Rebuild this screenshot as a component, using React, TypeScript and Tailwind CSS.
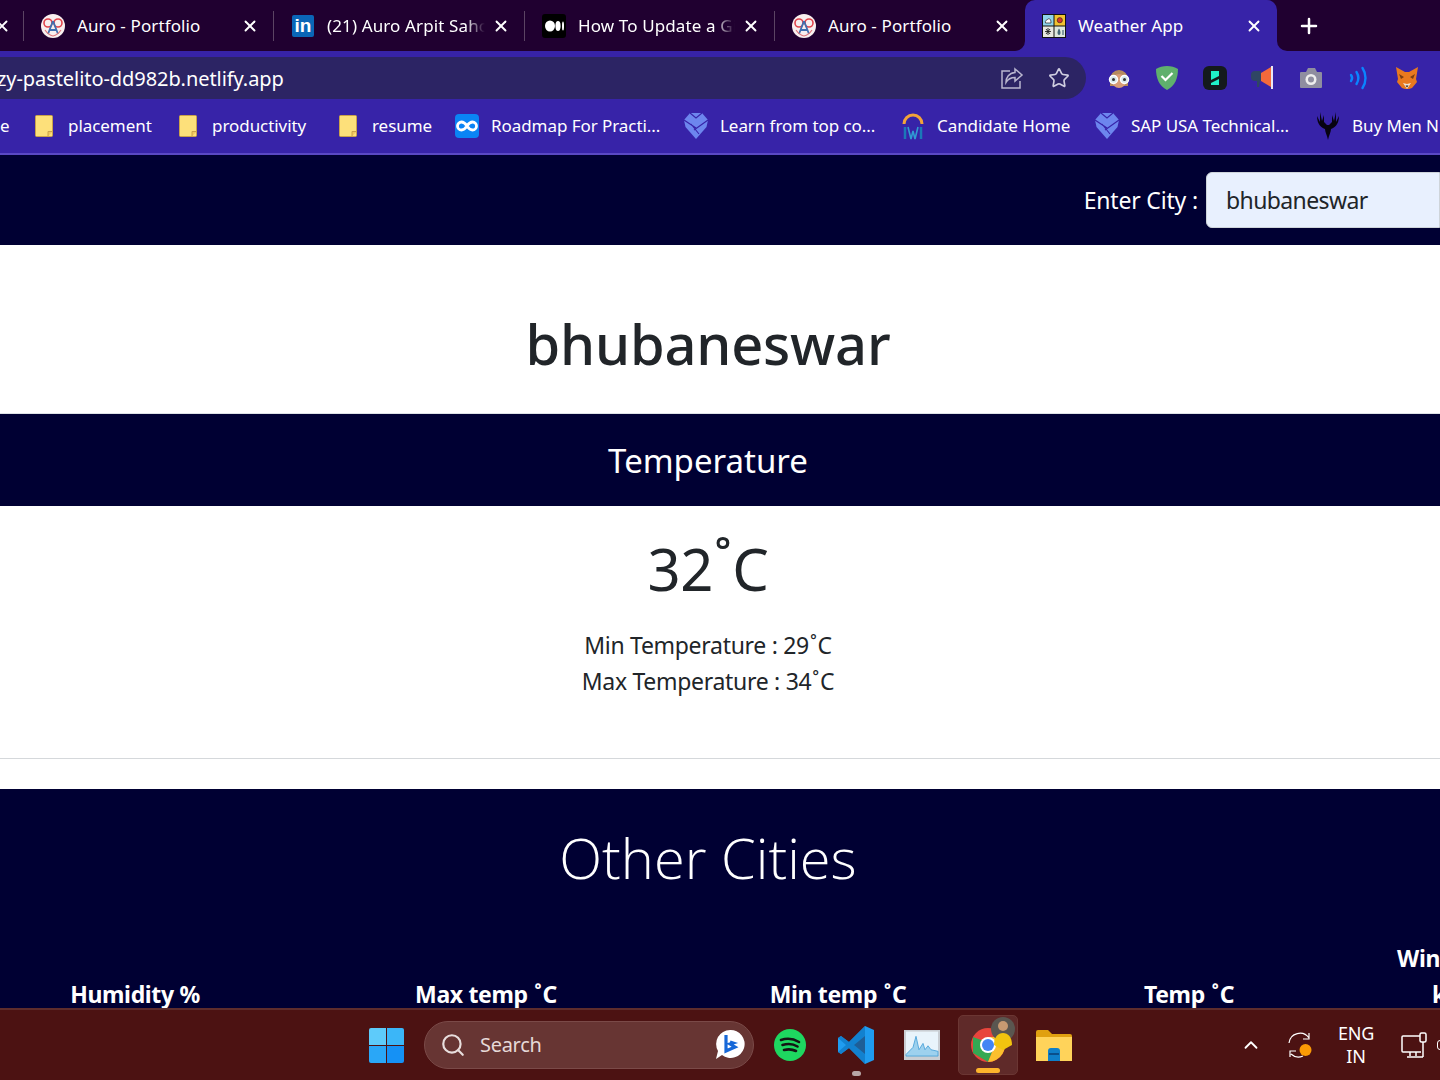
import { ChevronUp, Plus, Search, Star, X } from "lucide-react";
import type { ReactNode } from "react";

const uiFont = "[font-family:'Noto_Sans','Open_Sans',sans-serif]";

function AuroIcon() {
  return (
    <svg viewBox="0 0 24 24" className="size-6">
      <circle cx="12" cy="12" r="12" fill="#f8efef" />
      <circle cx="7" cy="9" r="4" fill="none" stroke="#e0444c" strokeWidth="1.6" />
      <circle cx="17" cy="9" r="4" fill="none" stroke="#e0444c" strokeWidth="1.6" />
      <path d="M12 7 7 20M12 7l5 13M9 16h6" fill="none" stroke="#3f6fb0" strokeWidth="1.8" />
      <path d="M4 16c2 3 4 5 8 6 4-1 6-3 8-6" fill="none" stroke="#e0777c" strokeWidth="1.2" />
    </svg>
  );
}

function LinkedinIcon() {
  return (
    <div className="flex size-[22px] items-center justify-center rounded-[2px] bg-[#0a66b7] text-[19px] leading-none font-bold text-white [font-family:'Liberation_Sans',sans-serif]">
      in
    </div>
  );
}

function MediumIcon() {
  return (
    <svg viewBox="0 0 24 24" className="size-6">
      <rect width="24" height="24" rx="3" fill="#000" />
      <ellipse cx="8" cy="12" rx="5" ry="5.5" fill="#fff" />
      <ellipse cx="16" cy="12" rx="2.6" ry="5" fill="#fff" />
      <ellipse cx="21" cy="12" rx="1" ry="4.5" fill="#fff" />
    </svg>
  );
}

function WeatherIcon() {
  return (
    <svg viewBox="0 0 24 24" className="size-6">
      <rect width="24" height="24" fill="#111" />
      <rect x="1" y="1" width="10.5" height="10.5" fill="#8fd3ea" />
      <rect x="12.5" y="1" width="10.5" height="10.5" fill="#f2c230" />
      <rect x="1" y="12.5" width="10.5" height="10.5" fill="#e8e8e0" />
      <rect x="12.5" y="12.5" width="10.5" height="10.5" fill="#dfe8dc" />
      <path d="M3.5 9c-1-3 2-3 2.5-4 2-1 3 1 3 4z" fill="#fff" stroke="#222" strokeWidth=".7" />
      <circle cx="17.8" cy="6.2" r="2.6" fill="#d8352a" stroke="#222" strokeWidth=".6" />
      <path d="M6 14v7M3 17.500h6M4 15l4 5M8 15l-4 5" stroke="#222" strokeWidth=".9" />
      <path d="M17 14.500c-2 3-2 6 0 6.500 2-.5 2-3.500 0-6.500z" fill="#467" />
      <path d="M21 16v5" stroke="#467" strokeWidth="1.200" />
    </svg>
  );
}

function FolderMark() {
  return (
    <svg viewBox="0 0 18 22" className="h-[22px] w-[18px]">
      <rect x="0.500" y="0.500" width="17" height="21" rx="1" fill="#fde07a" stroke="#caa24a" />
      <path d="M13 21.500v-5h4.500" fill="#f1c95f" stroke="#caa24a" />
    </svg>
  );
}

function RoadmapIcon() {
  return (
    <div className="flex size-6 items-center justify-center rounded-[4px] bg-[#0a84f5]">
      <svg viewBox="0 0 24 24" className="size-6" fill="none" stroke="#fff" strokeWidth="2.800">
        <path d="M12 12c-2-3-3.500-4-5.500-4a4 4 0 0 0 0 8c2 0 3.500-1 5.500-4s3.500-4 5.500-4a4 4 0 0 1 0 8c-2 0-3.500-1-5.500-4z" />
      </svg>
    </div>
  );
}

function GemIcon() {
  return (
    <svg viewBox="0 0 24 28" className="h-[28px] w-6">
      <path d="M6 1h12l6 7-1.500 7L12 27 1.500 15 0 8z" fill="#6d86ee" />
      <path d="M6 1l6 5 6-5M0 8l12 8M24 8 10 18M7 12l8 10" fill="none" stroke="#3723a8" strokeWidth="1.100" />
    </svg>
  );
}

function CandidateIcon() {
  return (
    <svg viewBox="0 0 24 28" className="h-[28px] w-6">
      <path d="M3 12a9 9 0 0 1 18 0" fill="none" stroke="#f2a33a" strokeWidth="3" />
      <path d="M4 27V15M20 27V15" stroke="#1b78b8" strokeWidth="2.500" />
      <path d="M7 15l3 12 2-8 2 8 3-12" fill="none" stroke="#2f9bd3" strokeWidth="1.600" />
    </svg>
  );
}

function DeerIcon() {
  return (
    <svg viewBox="0 0 24 30" className="h-[30px] w-6">
      <path
        d="M12 29c-1-5-3-8-3-11-3-1-8-4-8-13l3 6V1l2 9 2-6v7l3 3h2l3-3V4l2 6 2-9v10l3-6c0 9-5 12-8 13 0 3-2 6-3 11z"
        fill="#070312"
      />
    </svg>
  );
}

function ShareBoxIcon() {
  return (
    <svg viewBox="0 0 24 24" className="mr-[24px] size-[24px]" fill="none" stroke="#b9b6cf" strokeWidth="1.500">
      <path d="M10 5H2v17h18v-7" />
      <path d="M15 3l7 6-7 6v-3.500c-4 0-7 1.500-9 5 0-5 3-9.500 9-10z" />
    </svg>
  );
}

function Tab({
  icon,
  title,
  fade,
  tabClass,
}: {
  icon: ReactNode;
  title: string;
  fade?: string;
  tabClass: string;
}) {
  return (
    <div className={`flex h-full shrink-0 items-center ${tabClass}`}>
      <div className="ml-[17px] flex w-6 shrink-0 justify-center">{icon}</div>
      <div
        className={`ml-3 flex-1 overflow-hidden text-[17px] tracking-[0.12px] whitespace-nowrap text-white ${fade ?? ""}`}
      >
        {title}
      </div>
      <X className="mr-[14px] ml-1 size-[18px] shrink-0 text-white" strokeWidth={2.5} />
    </div>
  );
}

function Bookmark({
  icon,
  label,
  itemClass,
}: {
  icon: ReactNode;
  label: string;
  itemClass: string;
}) {
  return (
    <div className={`flex shrink-0 items-center ${itemClass}`}>
      <div className="flex w-6 shrink-0 justify-center">{icon}</div>
      <span className="ml-3 text-[17px] tracking-[-0.06px] whitespace-nowrap text-white">{label}</span>
    </div>
  );
}

function ExtensionIcons() {
  return (
    <div className="ml-[21px] flex items-center gap-[24px]">
      <svg viewBox="0 0 24 24" className="size-6">
        <path d="M3 13a9 9 0 0 1 18 0v7H3z" fill="#b58a5e" />
        <circle cx="12" cy="15" r="7" fill="#d89c78" />
        <circle cx="6.500" cy="13.500" r="4" fill="#d6e6ea" stroke="#fff" strokeWidth="1.500" />
        <circle cx="17.500" cy="13.500" r="4" fill="#d6e6ea" stroke="#fff" strokeWidth="1.500" />
        <circle cx="6.500" cy="13.500" r="1.500" fill="#333" />
        <circle cx="17.500" cy="13.500" r="1.500" fill="#333" />
      </svg>
      <svg viewBox="0 0 24 24" className="size-6">
        <path d="M12 0c4 0 8 1 11 3 0 9-3 17-11 21C4 20 1 12 1 3c3-2 7-3 11-3z" fill="#5fb06d" />
        <path d="m6.500 10 4 4 7-7" fill="none" stroke="#fff" strokeWidth="2.200" />
      </svg>
      <svg viewBox="0 0 24 24" className="size-6">
        <rect width="24" height="24" rx="6" fill="#141a1c" />
        <path d="M8 5h8v5l-8 4zM8 17l8-4v6H8z" fill="#1ff0c8" />
      </svg>
      <svg viewBox="0 0 24 24" className="size-6">
        <path d="M0 9a4 4 0 0 1 4-4h6v10H4a4 4 0 0 1-4-4z" fill="#2f4664" />
        <path d="M6 15h3l-1 6H6z" fill="#2f4664" />
        <path d="M10 7 20 1v20L10 15z" fill="#f5693a" />
        <rect x="20" y="0" width="2" height="23" fill="#e8e6f5" />
      </svg>
      <svg viewBox="0 0 24 24" className="size-6">
        <path d="M2 6h5l2-4h7l2 4h4a1 1 0 0 1 1 1v14a1 1 0 0 1-1 1H2a1 1 0 0 1-1-1V7a1 1 0 0 1 1-1z" fill="#8f8ea0" />
        <circle cx="12" cy="13.500" r="5.500" fill="#eee" />
        <circle cx="12" cy="13.500" r="3" fill="#8f8ea0" />
      </svg>
      <svg viewBox="0 0 24 24" className="size-6" fill="none" stroke="#0a84ff" strokeWidth="2.400" strokeLinecap="round">
        <path d="M4 9c1.500 2 1.500 4 0 6M9.500 6c2.500 4 2.500 8 0 12M15.500 2c4 6 4 14 0 20" />
      </svg>
      <svg viewBox="0 0 24 24" className="size-6">
        <path d="M1 1l9 5h4l9-5-2 12 1 3-5 6-3 1h-4l-3-1-5-6 1-3z" fill="#e8791f" />
        <path d="M8 17l4 6 4-6-4 1z" fill="#f3e3cf" />
        <path d="M4 8l5 3-3 2zM20 8l-5 3 3 2z" fill="#7a3d12" />
        <path d="M10.500 19.500h3L12 21.500z" fill="#222" />
      </svg>
    </div>
  );
}

function BrowserChrome() {
  return (
    <div className={uiFont}>
      <div className="flex h-[51px] items-center overflow-hidden bg-[#200030]">
        <div className="flex h-full w-[24px] shrink-0 items-center justify-end">
          <X className="mr-[12px] size-[18px] shrink-0 text-white" strokeWidth={2.5} />
          <div className="h-[30px] w-px shrink-0 bg-[#5b4463]" />
        </div>
        <div className="flex h-full items-center">
          <Tab icon={<AuroIcon />} title="Auro - Portfolio" tabClass="w-[249px]" />
          <div className="h-[30px] w-px shrink-0 bg-[#5b4463]" />
          <Tab
            icon={<LinkedinIcon />}
            title="(21) Auro Arpit Sahoo"
            tabClass="w-[250px]"
            fade="[mask-image:linear-gradient(to_right,black_86%,transparent_98%)]"
          />
          <div className="h-[30px] w-px shrink-0 bg-[#5b4463]" />
          <Tab
            icon={<MediumIcon />}
            title="How To Update a GitHub"
            tabClass="w-[249px]"
            fade="[mask-image:linear-gradient(to_right,black_85%,transparent_98%)]"
          />
          <div className="h-[30px] w-px shrink-0 bg-[#5b4463]" />
          <Tab icon={<AuroIcon />} title="Auro - Portfolio" tabClass="w-[250px]" />
          <div className="relative h-full">
            <div className="absolute bottom-0 -left-[10px] size-[10px] bg-[#3723a8]">
              <div className="size-full rounded-br-[10px] bg-[#200030]" />
            </div>
            <Tab icon={<WeatherIcon />} title="Weather App" tabClass="w-[252px] rounded-t-[10px] bg-[#3723a8]" />
            <div className="absolute -right-[10px] bottom-0 size-[10px] bg-[#3723a8]">
              <div className="size-full rounded-bl-[10px] bg-[#200030]" />
            </div>
          </div>
        </div>
        <Plus className="ml-[20px] size-[24px] shrink-0 text-white" strokeWidth={2.5} />
      </div>

      <div className="flex h-[48px] items-end bg-[#3723a8]">
        <div className="flex h-[42px] w-[1086px] shrink-0 items-center overflow-hidden rounded-r-full bg-[#2c2464]">
          <span className="-ml-[3px] flex-1 pt-[2px] text-[20px] tracking-[-0.07px] whitespace-nowrap text-white">
            zy-pastelito-dd982b.netlify.app
          </span>
          <ShareBoxIcon />
          <Star className="mr-[16px] size-[22px] text-[#cfcde0]" strokeWidth={1.8} />
        </div>
        <div className="self-center pt-[6px]">
          <ExtensionIcons />
        </div>
      </div>

      <div className="flex h-[56px] items-center overflow-hidden border-b-2 border-b-[#5a48c4] bg-[#3723a8]">
        <span className="w-[32px] shrink-0 text-[17px] text-white">e</span>
        <Bookmark icon={<FolderMark />} label="placement" itemClass="w-[144px]" />
        <Bookmark icon={<FolderMark />} label="productivity" itemClass="w-[160px]" />
        <Bookmark icon={<FolderMark />} label="resume" itemClass="w-[119px]" />
        <Bookmark icon={<RoadmapIcon />} label="Roadmap For Practi..." itemClass="w-[229px]" />
        <Bookmark icon={<GemIcon />} label="Learn from top co..." itemClass="w-[217px]" />
        <Bookmark icon={<CandidateIcon />} label="Candidate Home" itemClass="w-[194px]" />
        <Bookmark icon={<GemIcon />} label="SAP USA Technical..." itemClass="w-[221px]" />
        <Bookmark icon={<DeerIcon />} label="Buy Men Nike" itemClass="w-[140px]" />
      </div>
    </div>
  );
}

function Degree() {
  return <span className="mx-[1px]">˚</span>;
}

function WeatherPage() {
  return (
    <div className="min-h-0 flex-1 overflow-hidden bg-white text-[#212529] [font-family:'Noto_Sans','Open_Sans',sans-serif]">
      <nav className="flex h-[90px] items-center justify-end bg-[#000033]">
        <label className="mt-[1px] mr-[8px] text-[23px] tracking-[-0.17px] text-white">Enter City :</label>
        <input
          readOnly
          value="bhubaneswar"
          className="h-[56px] w-[234px] rounded-l-[6px] border border-[#ced4da] bg-[#e8f0fe] px-[19px] text-[23px] tracking-[-0.6px] text-[#212529]"
        />
      </nav>

      <div className="w-[1416px]">
        <h1 className="flex h-[168px] items-center justify-center pt-[28px] text-[56px] leading-none font-medium tracking-[-0.2px]">
          bhubaneswar
        </h1>
      </div>

      <div className="flex h-[93px] w-full items-center border-t border-t-[#dee2e6] bg-[#000033]">
        <div className="w-[1416px] pt-[2px] text-center text-[33px] text-white">Temperature</div>
      </div>

      <div className="h-[253px] w-full border-b border-b-[#d5d8db]">
        <div className="w-[1416px] pt-[26px] text-center">
          <div className="text-[58px] leading-[74px] tracking-[-0.3px]">
            32
            <span className="relative -top-[6px] mx-[1px]">˚</span>C
          </div>
          <div className="mt-[21px] text-[23px] leading-[36px] tracking-[-0.3px]">
            <div>
              Min Temperature : 29
              <Degree />C
            </div>
            <div>
              Max Temperature : 34
              <Degree />C
            </div>
          </div>
        </div>
      </div>

      <div className="h-[30px]" />

      <section className="h-[219px] overflow-hidden bg-[#000033] text-white">
        <div className="w-[1416px] pt-[28px] text-center text-[56px] leading-[80px] font-light [font-family:'Open_Sans',sans-serif]">
          Other Cities
        </div>
        <div className="mt-[43px] flex items-end text-center text-[23px] leading-[36px] font-bold tracking-[-0.35px] whitespace-nowrap">
          <div className="w-[270px] shrink-0">Humidity %</div>
          <div className="w-[432px] shrink-0">
            Max temp <Degree />C
          </div>
          <div className="w-[272px] shrink-0">
            Min temp <Degree />C
          </div>
          <div className="w-[430px] shrink-0">
            Temp <Degree />C
          </div>
          <div className="w-[130px] shrink-0 -translate-x-[7px]">
            Wind Speed
            <br />
            km/h
          </div>
        </div>
      </section>
    </div>
  );
}

function Taskbar() {
  return (
    <div className="relative flex h-[72px] shrink-0 items-center border-t-2 border-t-[#5e2c2c] bg-[#4c1212] text-white [font-family:'Noto_Sans','Open_Sans',sans-serif]">
      <div className="ml-[369px] grid shrink-0 grid-cols-2 gap-[1px]">
        <div className="size-[17px] rounded-tl-[2px] bg-[#5ecbfa]" />
        <div className="size-[17px] rounded-tr-[2px] bg-[#3bb6f8]" />
        <div className="size-[17px] rounded-bl-[2px] bg-[#2aa7f7]" />
        <div className="size-[17px] rounded-br-[2px] bg-[#1591f5]" />
      </div>

      <div className="ml-[20px] flex h-[48px] w-[330px] shrink-0 items-center rounded-full border border-[#7a4a48] bg-[#673533]">
        <Search className="ml-[15px] size-[26px] text-[#e8dedd]" strokeWidth={2} />
        <span className="ml-[14px] flex-1 text-[20px] tracking-[-0.3px] text-[#e6d9d8]">Search</span>
        <svg viewBox="0 0 30 32" className="mr-[8px] h-[32px] w-[30px]">
          <path d="M15 1a14 14 0 1 1-8 25l-6 4 2-8A14 14 0 0 1 15 1z" fill="#fff" />
          <path d="M11 6v16l9-4-5-3 3-1-3-1" fill="none" stroke="#1668d8" strokeWidth="3.200" />
        </svg>
      </div>

      <svg viewBox="0 0 32 32" className="ml-[20px] size-[32px] shrink-0">
        <circle cx="16" cy="16" r="16" fill="#1ed760" />
        <path d="M7 11c6-2 13-1 18 2M8.500 16c5-1.500 11-1 15 1.500M10 21c4-1 9-.5 12 1" fill="none" stroke="#141414" strokeWidth="2.600" strokeLinecap="round" />
      </svg>

      <div className="relative ml-[32px] flex shrink-0 flex-col items-center">
        <svg viewBox="0 0 36 38" className="h-[38px] w-[36px]">
          <path d="M27 0 36 4v30l-9 4L11 22 3 28 0 26V12l3-2 8 6z" fill="#1f9cf0" />
          <path d="M27 10 16 19l11 9z" fill="#4c1212" />
          <path d="M27 0v38L11 22 3 28 0 26l8-7-8-7 3-2 8 6z" fill="#0f78c4" opacity=".75" />
        </svg>
        <div className="absolute -bottom-[12px] h-[5px] w-[9px] rounded-full bg-[#b8a5a5]" />
      </div>

      <svg viewBox="0 0 36 38" className="ml-[30px] h-[30px] w-[36px] shrink-0" preserveAspectRatio="none">
        <rect width="36" height="38" fill="#c9ced3" />
        <rect x="2" y="2" width="32" height="31" fill="#e9f4fb" />
        <path d="M2 31 9 22l3-14 3 17 4-8 2 8 3-5 3 5 7 2v6H2z" fill="#9dd1ee" stroke="#4ca3d9" />
      </svg>

      <div className="relative ml-[18px] flex h-[60px] w-[60px] shrink-0 items-center justify-center rounded-[5px] border border-[#6b3633] bg-[#5f2a29]">
        <svg viewBox="0 0 36 36" className="size-[36px]">
          <circle cx="18" cy="18" r="17" fill="#e8453c" />
          <path d="M3 10v16l15 9 7-17z" fill="#34a853" />
          <path d="M18 10h15a17 17 0 0 1-15 25l7-17z" fill="#fbc02d" />
          <circle cx="18" cy="18" r="8" fill="#fff" />
          <circle cx="18" cy="18" r="6" fill="#4285f4" />
        </svg>
        <svg viewBox="0 0 24 34" className="absolute top-[1px] right-[2px] h-[34px] w-[24px]">
          <circle cx="12" cy="12" r="12" fill="#5a5650" />
          <circle cx="12" cy="9" r="5" fill="#c79a72" />
          <path d="M3 28c0-8 4-12 9-12s9 4 9 12l-9 5z" fill="#f2c40f" />
        </svg>
        <div className="absolute bottom-[1px] h-[5px] w-[24px] rounded-full bg-[#fdb42c]" />
      </div>

      <svg viewBox="0 0 36 32" className="ml-[18px] h-[32px] w-[36px] shrink-0">
        <path d="M0 3a2 2 0 0 1 2-2h10l4 4h18a2 2 0 0 1 2 2v23H0z" fill="#e0a010" />
        <path d="M0 8h36v24H0z" fill="#ffd35a" />
        <path d="M12 22a3 3 0 0 1 3-3h6a3 3 0 0 1 3 3v10H12z" fill="#0f7fc8" />
        <path d="M13 24h10v2H13z" fill="#0a4f8a" />
      </svg>

      <ChevronUp className="ml-[168px] size-[22px] shrink-0" strokeWidth={2} />

      <svg viewBox="0 0 28 28" className="ml-[24px] size-[28px] shrink-0" fill="none" stroke="#fff" strokeWidth="1.200">
        <path d="M3 12A11 11 0 0 1 23 7M23 2v6h-6M5 23a11 11 0 0 0 12 2M4 26v-6h6" />
        <circle cx="19.500" cy="19" r="6" fill="#fb9a05" stroke="none" />
      </svg>

      <div className="ml-[22px] flex w-[40px] shrink-0 flex-col items-center text-[18px] leading-[23px] tracking-[-0.2px]">
        <span>ENG</span>
        <span>IN</span>
      </div>

      <svg viewBox="0 0 30 26" className="ml-[25px] h-[26px] w-[30px] shrink-0" fill="none" stroke="#fff" strokeWidth="1.500">
        <path d="M19 4H2a1 1 0 0 0-1 1v14a1 1 0 0 0 1 1h18M9 20v4M15 20v4M6 25h16" />
        <rect x="19" y="1" width="6" height="9" rx="1.500" />
        <path d="M22 10v15" />
      </svg>
      <div className="ml-[6px] h-[10px] w-[8px] shrink-0 rounded-l-[3px] border border-white" />
    </div>
  );
}

export default function App() {
  return (
    <div className="flex h-[1080px] w-[1440px] flex-col overflow-hidden">
      <BrowserChrome />
      <WeatherPage />
      <Taskbar />
    </div>
  );
}
